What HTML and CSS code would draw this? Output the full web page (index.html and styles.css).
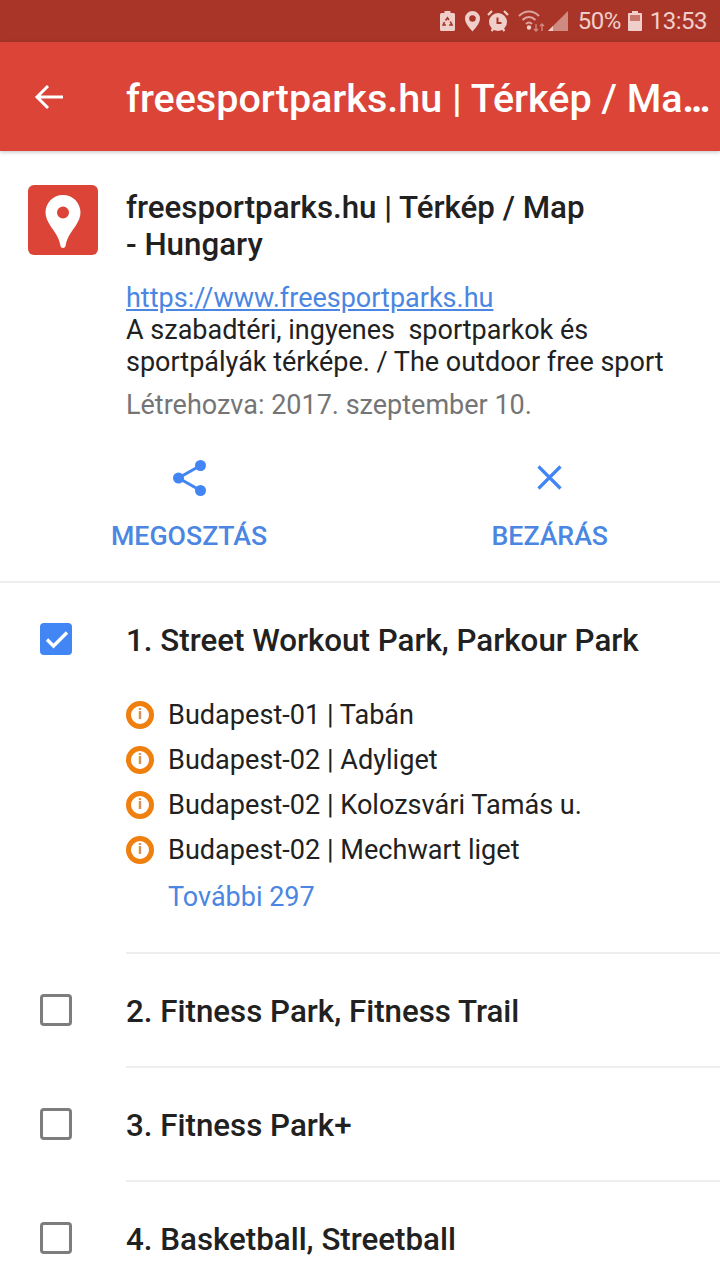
FILE: index.html
```html
<!DOCTYPE html>
<html lang="hu">
<head>
<meta charset="utf-8">
<title>freesportparks.hu</title>
<link rel="stylesheet" href="styles.css">
</head>
<body>
<div class="phone">
  <div class="status">
    <svg class="st-ic st-recycle" width="15" height="22" viewBox="0 0 15 22"><path fill="#f0cfca" d="M4.500 1h6v2h3a1.500 1.500 0 0 1 1.500 1.500v15a1.500 1.500 0 0 1-1.500 1.500h-12A1.500 1.500 0 0 1 0 19.500v-15A1.500 1.500 0 0 1 1.500 3h3z"/><path fill="none" stroke="#a93529" stroke-width="1.700" d="M5.500 10.500l2-2.500 1.500 2M10.300 11.500l1.700 3.500H9M6 15H3.200l1.300-2.800"/></svg>
    <svg class="st-ic st-pin" width="15" height="22" viewBox="0 0 15 22"><path fill="#f0cfca" fill-rule="evenodd" d="M7.500 1A7.500 7.500 0 0 1 15 8.500C15 13 10.500 18 7.500 21.500 4.500 18 0 13 0 8.500A7.500 7.500 0 0 1 7.500 1zm0 4.200a3.300 3.300 0 1 0 0 6.600 3.300 3.300 0 0 0 0-6.600z"/></svg>
    <svg class="st-ic st-alarm" width="22" height="22" viewBox="0 0 22 22"><circle cx="11" cy="12" r="9" fill="#f0cfca"/><path d="M1 5l4-4M21 5l-4-4M4.500 21l2-2.500M17.500 21l-2-2.500" stroke="#f0cfca" stroke-width="2.200"/><path d="M10.500 7.500v5.500h4" fill="none" stroke="#a93529" stroke-width="2"/></svg>
    <svg class="st-ic st-wifi" width="28" height="22" viewBox="0 0 28 22"><path d="M1 6c6-6 14-6 20 0M4.500 10c4-4 9-4 13 0M8 14c2-2 4-2 6 0" fill="none" stroke="#dba59e" stroke-width="2"/><circle cx="11" cy="17.500" r="2.200" fill="#f0cfca"/><path d="M18 14v7M16 19l2 2 2-2M24 21v-7M22 16l2-2 2 2" fill="none" stroke="#d08a82" stroke-width="1.300"/></svg>
    <svg class="st-ic st-signal" width="21" height="22" viewBox="0 0 21 22"><path fill="#cf8a82" d="M20 1v20H0z"/><path fill="#f0cfca" d="M0 21l5-5v5z"/></svg>
    <span class="st-text st-pct">50%</span>
    <svg class="st-ic st-batt" width="14" height="22" viewBox="0 0 14 22"><path fill="#f0cfca" d="M4 1h6v2h3a1 1 0 0 1 1 1v16a1 1 0 0 1-1 1H1a1 1 0 0 1-1-1V4a1 1 0 0 1 1-1h3z"/><rect x="2" y="5" width="10" height="6" fill="#c9776d"/></svg>
    <span class="st-text">13:53</span>
  </div>
  <header class="appbar">
    <svg class="back" width="30" height="26" viewBox="0 0 30 26"><path d="M29 13H3M14 2L3 13l11 11" fill="none" stroke="#fff" stroke-width="3"/></svg>
    <div class="appbar-title">freesportparks.hu | Térkép / Ma<span class="dots">...</span></div>
  </header>
  <section class="info">
    <div class="logo">
      <svg width="36" height="54" viewBox="0 0 36 54"><path fill="#fff" fill-rule="evenodd" d="M18 0c9.700 0 17.500 7.800 17.500 17.500 0 4.500-2 8.800-5 13.500-3.500 5.300-8.500 11-10 20-.4 2.500-4.600 2.500-5 0-1.500-9-6.500-14.700-10-20C2.500 26.300.5 22 .5 17.500.5 7.800 8.300 0 18 0zm0 11.500a6 6 0 1 0 0 12 6 6 0 0 0 0-12z"/></svg>
    </div>
    <div class="info-body">
      <h1 class="info-title">freesportparks.hu | Térkép / Map<br>- Hungary</h1>
      <a class="info-link">https://www.freesportparks.hu</a>
      <p class="info-desc">A szabadtéri, ingyenes&nbsp; sportparkok és<br>sportpályák térképe. / The outdoor free sport</p>
      <p class="info-date">Létrehozva: 2017. szeptember 10.</p>
    </div>
  </section>
  <div class="actions">
    <div class="action">
      <svg width="36" height="38" viewBox="-1.500 0 36 38"><g fill="#4285f4"><circle cx="28" cy="6.500" r="5.500"/><circle cx="6" cy="19" r="5.500"/><circle cx="28" cy="31.500" r="5.500"/></g><path d="M28 6.500L6 19l22 12.500" fill="none" stroke="#4285f4" stroke-width="3"/></svg>
      <span class="action-label">MEGOSZTÁS</span>
    </div>
    <div class="action">
      <svg width="36" height="38" viewBox="0 0 36 38"><path d="M6.500 7.500l22 22M28.500 7.500l-22 22" stroke="#4285f4" stroke-width="3.200" fill="none"/></svg>
      <span class="action-label">BEZÁRÁS</span>
    </div>
  </div>
  <div class="list">
    <div class="row row-open">
      <div class="check check-on"><svg width="32" height="32" viewBox="0 0 32 32"><path d="M7 16.500l6.500 6.500L27 9.500" fill="none" stroke="#fff" stroke-width="3.400"/></svg></div>
      <div class="row-body">
        <div class="row-title">1. Street Workout Park, Parkour Park</div>
        <ul class="places">
          <li class="place"><span class="info-ic">i</span>Budapest-01 | Tabán</li>
          <li class="place"><span class="info-ic">i</span>Budapest-02 | Adyliget</li>
          <li class="place"><span class="info-ic">i</span>Budapest-02 | Kolozsvári Tamás u.</li>
          <li class="place"><span class="info-ic">i</span>Budapest-02 | Mechwart liget</li>
        </ul>
        <div class="more">További 297</div>
      </div>
    </div>
    <div class="row">
      <div class="check"></div>
      <div class="row-body"><div class="row-title">2. Fitness Park, Fitness Trail</div></div>
    </div>
    <div class="row">
      <div class="check"></div>
      <div class="row-body"><div class="row-title">3. Fitness Park+</div></div>
    </div>
    <div class="row">
      <div class="check"></div>
      <div class="row-body"><div class="row-title">4. Basketball, Streetball</div></div>
    </div>
  </div>
</div>
</body>
</html>
```
FILE: styles.css
```css
* { box-sizing: border-box; }
html, body { margin: 0; padding: 0; }
body { font-family: Roboto, "Noto Sans", sans-serif; background: #fff; color: #212121; }
.phone { width: 720px; height: 1280px; overflow: hidden; background: #fff; }

.status { height: 42px; background: #a93529; display: flex; align-items: center; justify-content: flex-end; padding-right: 13px; }
.st-ic { display: block; }
.st-recycle { margin-right: 10px; }
.st-pin { margin-right: 7px; }
.st-alarm { margin-right: 9px; }
.st-wifi { margin-right: 2px; }
.st-signal { margin-right: 9px; }
.st-batt { margin-right: 8px; }
.st-text { font-size: 24px; letter-spacing: -.5px; color: #f0cfca; }
.st-pct { margin-right: 7px; }

.appbar { height: 109px; background: #db4437; display: flex; align-items: center; padding-left: 34px; box-shadow: 0 1px 4px rgba(0,0,0,.25); position: relative; }
.back { display: block; margin-right: 62px; }
.appbar-title { font-size: 39.5px; font-weight: 500; color: #fff; white-space: nowrap; padding-top: 4px; }
.dots { letter-spacing: -3px; font-weight: 700; }

.info { display: flex; padding: 34px 0 0 28px; }
.logo { width: 70px; height: 70px; flex: none; background: #db4437; border-radius: 6px; display: flex; justify-content: center; padding-top: 10px; margin-right: 28px; }
.info-body { flex: 1; min-width: 0; padding-top: 4px; }
.info-title { margin: 0 0 20px; font-size: 31.3px; line-height: 37px; font-weight: 500; color: #212121; }
.info-link { display: block; font-size: 27px; line-height: 31px; color: #4a86e2; text-decoration: underline; }
.info-desc { margin: 0; font-size: 27px; line-height: 32px; color: #212121; white-space: nowrap; }
.info-date { margin: 11px 0 0; font-size: 27px; line-height: 32px; color: #757575; }

.actions { display: flex; justify-content: space-between; padding: 38px 112px 0 111px; height: 162px; border-bottom: 2px solid #eeeeee; }
.action { display: flex; flex-direction: column; align-items: center; gap: 23px; }
.action-label { font-size: 26.7px; line-height: 32px; font-weight: 500; color: #4a86e2; }

.row { display: flex; }
.check { width: 32px; height: 32px; flex: none; margin: 40px 54px 0 40px; border: 3.500px solid #7d7d7d; border-radius: 4px; }
.check-on { border: 0; background: #4285f4; }
.check-on svg { display: block; }
.row-body { flex: 1; min-width: 0; padding: 39px 0 35px; border-bottom: 2px solid #eeeeee; }
.row:last-child .row-body { border-bottom: 0; }
.row-title { font-size: 31.3px; line-height: 38px; font-weight: 500; color: #212121; white-space: nowrap; }
.row-open .row-body { padding: 39px 0 39px; }
.places { list-style: none; margin: 32px 0 0; padding: 0; }
.place { display: flex; align-items: center; height: 45px; font-size: 27.1px; color: #212121; }
.info-ic { width: 28px; height: 28px; flex: none; margin-right: 14px; border: 5.500px solid #ef7f0e; border-radius: 50%; font-size: 15px; font-weight: 700; line-height: 17px; text-align: center; color: #d98a3c; }
.more { margin: 9px 0 0 42px; font-size: 27px; line-height: 32px; color: #4a86e2; }
```
